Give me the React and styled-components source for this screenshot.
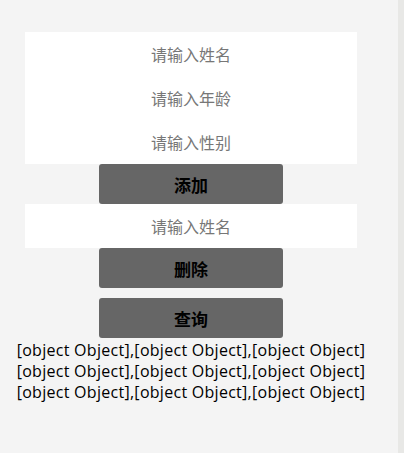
import React from 'react';
import styled, { createGlobalStyle } from 'styled-components';

const GlobalStyle = createGlobalStyle`
  html, body {
    margin: 0;
    padding: 0;
    background: #f4f4f4;
  }
  body {
    font-family: "Open Sans", "Noto Sans CJK SC", sans-serif;
  }
`;

const Page = styled.div`
  display: flex;
  min-height: 453px;
  background: #f4f4f4;
`;

const Main = styled.div`
  flex: 1;
  display: flex;
  flex-direction: column;
  align-items: center;
  padding: 32px 16px 0 0;
`;

const ScrollTrack = styled.div`
  width: 6px;
  background: #e8e8e6;
`;

const Input = styled.input`
  display: block;
  box-sizing: border-box;
  width: 332px;
  height: 44px;
  border: none;
  outline: none;
  background: #fff;
  text-align: center;
  font-size: 16px;
  font-family: "Noto Sans CJK SC", sans-serif;
  color: #333;
  &::placeholder {
    color: #777;
  }
`;

const Button = styled.button`
  display: block;
  box-sizing: border-box;
  width: 184px;
  height: 40px;
  margin-top: ${(p) => p.$gap || 0}px;
  border: none;
  border-radius: 3px;
  background: #666;
  color: #000;
  font-size: 17px;
  font-weight: bold;
  font-family: "Noto Sans CJK SC", sans-serif;
`;

const Result = styled.div`
  width: 382px;
  text-align: center;
  font-size: 16px;
  line-height: 21px;
  letter-spacing: 0.28px;
  color: #000;
  margin-top: 2px;
`;

const rows = [
  [{}, {}, {}],
  [{}, {}, {}],
  [{}, {}, {}],
];

export default function App() {
  return (
    <Page>
      <GlobalStyle />
      <Main>
        <Input placeholder="请输入姓名" />
        <Input placeholder="请输入年龄" />
        <Input placeholder="请输入性别" />
        <Button>添加</Button>
        <Input placeholder="请输入姓名" />
        <Button>删除</Button>
        <Button $gap={10}>查询</Button>
        <Result>
          {rows.map((r, i) => (
            <div key={i}>{String(r)}</div>
          ))}
        </Result>
      </Main>
      <ScrollTrack />
    </Page>
  );
}
